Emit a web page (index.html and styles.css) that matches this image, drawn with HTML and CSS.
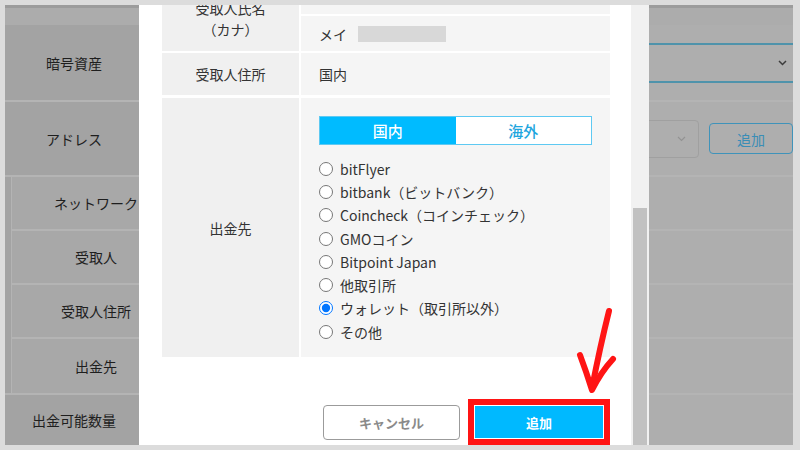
FILE: index.html
```html
<!DOCTYPE html>
<html lang="ja">
<head>
    <meta charset="UTF-8">
    <title>出金先アドレスの追加</title>
    <link rel="stylesheet" href="styles.css">
</head>
<body>
<div class="frame">
    <div class="page">
        <div class="page-top"></div>

        <div class="row row-asset">
            <div class="row-label">暗号資産</div>
            <div class="row-body">
                <div class="asset-select">
                    <svg class="chev" width="9" height="6" viewBox="0 0 9 6"><polyline points="1,1 4.5,4.5 8,1" fill="none" stroke="#3c3c3c" stroke-width="1.5"/></svg>
                </div>
            </div>
        </div>

        <div class="row row-address">
            <div class="row-label">アドレス</div>
            <div class="row-body">
                <div class="address-select">
                    <svg class="chev" width="9" height="6" viewBox="0 0 9 6"><polyline points="1,1 4.5,4.5 8,1" fill="none" stroke="#939393" stroke-width="1.2"/></svg>
                </div>
                <div class="address-add">追加</div>
            </div>
        </div>

        <div class="row row-group">
            <div class="group-pad"></div>
            <div class="group-col">
                <div class="sub-row"><div class="sub-label">ネットワーク</div></div>
                <div class="sub-row"><div class="sub-label">受取人</div></div>
                <div class="sub-row"><div class="sub-label">受取人住所</div></div>
                <div class="sub-row"><div class="sub-label">出金先</div></div>
            </div>
        </div>

        <div class="row row-qty">
            <div class="row-label">出金可能数量</div>
            <div class="row-body"></div>
        </div>

        <!-- modal -->
        <div class="modal">
            <div class="modal-body">
                <div class="modal-inner">
                    <div class="detail">
                        <div class="detail-label label-kana">受取人氏名<br>（カナ）</div>
                        <div class="value-stack">
                            <div class="detail-value value-top"></div>
                            <div class="detail-value value-kana">メイ <span class="masked"></span></div>
                        </div>
                    </div>
                    <div class="detail detail-address">
                        <div class="detail-label">受取人住所</div>
                        <div class="detail-value">国内</div>
                    </div>
                    <div class="detail detail-dest">
                        <div class="detail-label">出金先</div>
                        <div class="dest-value">
                            <div class="dest-toggle">
                                <div class="tab tab-on">国内</div>
                                <div class="tab tab-off">海外</div>
                            </div>
                            <div class="options">
                                <label class="option"><input type="radio" name="dest">bitFlyer</label>
                                <label class="option"><input type="radio" name="dest">bitbank（ビットバンク）</label>
                                <label class="option"><input type="radio" name="dest">Coincheck（コインチェック）</label>
                                <label class="option"><input type="radio" name="dest">GMOコイン</label>
                                <label class="option"><input type="radio" name="dest">Bitpoint Japan</label>
                                <label class="option"><input type="radio" name="dest">他取引所</label>
                                <label class="option"><input type="radio" name="dest" checked>ウォレット（取引所以外）</label>
                                <label class="option"><input type="radio" name="dest">その他</label>
                            </div>
                        </div>
                    </div>
                    <div class="actions">
                        <button type="button" class="btn-cancel">キャンセル</button>
                        <div class="mark">
                            <button type="button" class="btn-add">追加</button>
                        </div>
                    </div>
                </div>
            </div>
            <div class="scrollbar"><div class="thumb"></div></div>
        </div>

        <svg class="arrow" width="60" height="100" viewBox="0 0 60 100">
            <path d="M39 6 Q30 42 22 83" fill="none" stroke="#ff1414" stroke-width="6" stroke-linecap="round"/>
            <path d="M10 50 Q16 66 22 85 Q31 67 43 54" fill="none" stroke="#ff1414" stroke-width="6" stroke-linecap="round" stroke-linejoin="round"/>
        </svg>
    </div>
</div>
</body>
</html>
```

FILE: styles.css
```css
/* General */
* {
    box-sizing: border-box;
}

body {
    margin: 0;
    background-color: #dcdcdc;
    font-family: "Noto Sans CJK JP", "Noto Sans", sans-serif;
    color: #333;
}

.frame {
    padding: 5px 7px 5px 5px;
}

/* Page behind the modal (dimmed) */
.page {
    position: relative;
    width: 788px;
    height: 440px;
    overflow: hidden;
    background-color: #aeaeae;
    color: #1e1e1e;
    font-size: 14px;
}

.page-top {
    height: 20px;
    border-top: 3px solid #9c9c9c;
    background-color: #acacac;
}

.row {
    display: flex;
    border-top: 2px solid #b4b4b4;
}

.row-asset {
    height: 75px;
    border-top: none;
}

.row-address {
    height: 75px;
}

.row-group {
    height: 218px;
}

.row-qty {
    height: 52px;
}

.row-label {
    width: 134px;
    background-color: #a3a3a3;
    display: flex;
    align-items: center;
    justify-content: center;
    padding-left: 4px;
}

.row-body {
    flex: 1;
    display: flex;
    align-items: center;
}

.asset-select {
    flex: 1;
    height: 40px;
    margin-left: 60px;
    border-top: 2px solid #4f93ab;
    border-bottom: 2px solid #4f93ab;
    display: flex;
    align-items: center;
    justify-content: flex-end;
    padding-right: 6px;
}

.address-select {
    flex: 1;
    height: 38px;
    margin-left: 60px;
    border: 1px solid #a0a0a0;
    border-radius: 4px;
    display: flex;
    align-items: center;
    justify-content: flex-end;
    padding-right: 12px;
}

.address-add {
    width: 84px;
    height: 31px;
    margin-left: 10px;
    flex-shrink: 0;
    border: 1px solid #3f93ba;
    border-radius: 4px;
    color: #3a8db6;
    display: flex;
    align-items: center;
    justify-content: center;
}

.group-pad {
    width: 6px;
    background-color: #a3a3a3;
}

.group-col {
    flex: 1;
    border-left: 1px solid #b4b4b4;
}

.sub-row {
    height: 54px;
    display: flex;
    border-bottom: 2px solid #b4b4b4;
}

.sub-row:last-child {
    border-bottom: none;
}

.sub-label {
    width: 168px;
    background-color: #a8a8a8;
    display: flex;
    align-items: center;
    justify-content: center;
}

/* Modal */
.modal {
    position: absolute;
    left: 134px;
    top: 0;
    width: 510px;
    height: 440px;
    display: flex;
    background-color: #ffffff;
    color: #333;
}

.modal-body {
    width: 492px;
    overflow: hidden;
    padding: 0 21px 0 23px;
}

.modal-inner {
    margin-top: -24px;
}

.scrollbar {
    width: 18px;
    background-color: #f1f1f1;
    padding: 203px 2px 0;
}

.thumb {
    height: 100%;
    background-color: #c1c1c1;
}

.detail {
    display: grid;
    grid-template-columns: 137px 309px;
    column-gap: 2px;
    margin-bottom: 2px;
}

.detail-label {
    background-color: #f0f0f0;
    display: flex;
    align-items: center;
    justify-content: center;
    text-align: center;
    line-height: 18px;
}

.label-kana {
    line-height: 21px;
    padding-top: 6px;
}

.detail-value {
    background-color: #f5f5f5;
    padding: 0 18px;
    display: flex;
    align-items: center;
}

.value-stack {
    display: flex;
    flex-direction: column;
    gap: 2px;
}

.value-top {
    height: 33px;
}

.value-kana {
    height: 35px;
}

.masked {
    display: inline-block;
    width: 88px;
    height: 16px;
    margin-left: 11px;
    background-color: #d8d8d8;
}

.detail-address {
    height: 42px;
    margin-bottom: 3px;
}

.dest-value {
    background-color: #f5f5f5;
    padding: 18px 18px 14px;
}

.dest-toggle {
    display: grid;
    grid-template-columns: 1fr 1fr;
    height: 29px;
    border: 1px solid #5ec9f2;
    margin-bottom: 12px;
}

.tab {
    display: flex;
    align-items: center;
    justify-content: center;
    font-size: 15px;
    font-weight: 500;
}

.tab-on {
    background-color: #00bbff;
    color: #ffffff;
}

.tab-off {
    background-color: #ffffff;
    color: #1ea6de;
}

.option {
    display: flex;
    align-items: center;
    height: 23.3px;
    font-size: 14px;
    color: #333;
}

.option input {
    width: 14px;
    height: 14px;
    margin: 0 7px 0 0;
}

.actions {
    display: flex;
    align-items: center;
    gap: 8px;
    margin-top: 42px;
    padding-left: 161px;
}

.btn-cancel {
    width: 137px;
    height: 35px;
    border: 1px solid #9b9b9b;
    border-radius: 4px;
    background-color: #ffffff;
    color: #8a8a8a;
    font-family: inherit;
    font-size: 13px;
    font-weight: bold;
}

.mark {
    display: flex;
    border: 6px solid #ff1414;
    padding: 1px;
}

.btn-add {
    width: 128px;
    height: 32px;
    border: none;
    background-color: #00b9ff;
    color: #ffffff;
    font-family: inherit;
    font-size: 13px;
    font-weight: bold;
}

/* annotation arrow */
.arrow {
    position: absolute;
    left: 565px;
    top: 300px;
}
```
